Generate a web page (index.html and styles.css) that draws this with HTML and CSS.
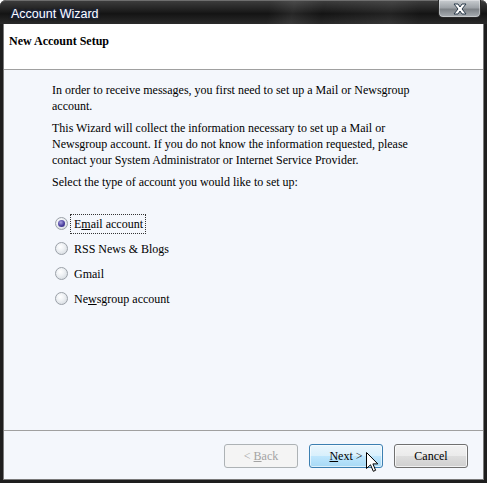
FILE: index.html
```html
<!DOCTYPE html>
<html lang="en">
<head>
  <meta charset="UTF-8">
  <title>Account Wizard</title>
  <link rel="stylesheet" href="styles.css">
</head>
<body>

  <div class="window">
    <!-- Titelleiste -->
    <div class="titlebar">
      <span class="title">Account Wizard</span>
      <div class="close">
        <svg width="16" height="12" viewBox="0 0 16 12">
          <path d="M2 1 L6 1 L8 4 L10 1 L14 1 L10 6 L14 11 L10 11 L8 8 L6 11 L2 11 L6 6 Z" fill="#fff" stroke="#2a3a4a" stroke-width="1"/>
        </svg>
      </div>
    </div>

    <div class="client">
      <div class="header">New Account Setup</div>

      <div class="content">
        <p>In order to receive messages, you first need to set up a Mail or Newsgroup<br>account.</p>
        <p>This Wizard will collect the information necessary to set up a Mail or<br>Newsgroup account. If you do not know the information requested, please<br>contact your System Administrator or Internet Service Provider.</p>
        <p>Select the type of account you would like to set up:</p>

        <div class="radios">
          <div class="radio-row">
            <span class="radio checked"></span>
            <span class="label focused">E<u>m</u>ail account</span>
          </div>
          <div class="radio-row">
            <span class="radio"></span>
            <span class="label">RSS News &amp; Blogs</span>
          </div>
          <div class="radio-row">
            <span class="radio"></span>
            <span class="label">Gmail</span>
          </div>
          <div class="radio-row">
            <span class="radio"></span>
            <span class="label">Ne<u>w</u>sgroup account</span>
          </div>
        </div>
      </div>

      <div class="footer">
        <button class="btn" disabled>&lt; <u>B</u>ack</button>
        <button class="btn default"><u>N</u>ext &gt;</button>
        <button class="btn">Cancel</button>
      </div>
    </div>

    <!-- Mauszeiger -->
    <svg class="cursor" width="13" height="21" viewBox="0 0 13 21">
      <path d="M0.5 0.5 L0.5 16.5 L4.5 12.8 L7.3 19.3 L9.6 18.3 L6.9 11.9 L11.8 11.9 Z" fill="#fff" stroke="#000" stroke-width="1" stroke-linejoin="miter"/>
    </svg>
  </div>

</body>
</html>
```

FILE: styles.css
```css
body {
  margin: 0;
  padding: 0;
  background: #fff;
}

.window {
  position: relative;
  width: 487px;
  height: 483px;
  box-sizing: border-box;
  padding: 0 3px 3px 3px;
  background: #1e1e1e;
  border-radius: 6px 6px 0 0;
  display: flex;
  flex-direction: column;
}

.titlebar {
  height: 24px;
  flex: none;
  display: flex;
  align-items: flex-start;
  justify-content: space-between;
  margin: 0 -3px;
  padding: 0 6px 0 11px;
  border-radius: 6px 6px 0 0;
  border-top: 1px solid #6e6e6e;
  box-sizing: border-box;
  background:
    linear-gradient(100deg, rgba(255,255,255,0) 55%, rgba(255,255,255,0.08) 60%, rgba(255,255,255,0) 66%, rgba(255,255,255,0.06) 80%, rgba(255,255,255,0) 86%),
    linear-gradient(to bottom, #3c3c3c 0, #1c1c1c 45%, #141414 55%, #2a2a2a 100%);
}

.title {
  font-family: "Liberation Sans", Arial, sans-serif;
  font-size: 12.5px;
  color: #fff;
  line-height: 14px;
  margin-top: 6px;
  text-shadow: 0 0 3px #1d2f6a, 0 0 2px #1d2f6a;
}

.close {
  width: 43px;
  height: 18px;
  margin-top: -1px;
  box-sizing: border-box;
  border: 1px solid #2a2a2a;
  border-top: none;
  border-radius: 0 0 5px 5px;
  background: linear-gradient(to bottom, #c9cdd1 0, #9ea3a8 45%, #7d8287 55%, #a9aeb3 100%);
  box-shadow: inset 0 0 0 1px rgba(255,255,255,0.35);
  display: flex;
  align-items: center;
  justify-content: center;
}

.client {
  flex: 1;
  display: flex;
  flex-direction: column;
  border: 1px solid #7a7a7a;
  border-top: none;
  background: #f4f7fc;
}

.header {
  height: 46px;
  box-sizing: border-box;
  background: #fff;
  border-bottom: 1px solid #a0a0a0;
  padding: 10px 0 0 5px;
  font-family: "Liberation Serif", "Times New Roman", serif;
  font-weight: bold;
  font-size: 12px;
}

.content {
  flex: 1;
  padding: 12px 0 0 48px;
  font-family: "Liberation Serif", "Times New Roman", serif;
  font-size: 12px;
  line-height: 16px;
  color: #000;
}

.content p {
  margin: 0 0 6px 0;
}

.radios {
  margin-top: 21px;
  display: flex;
  flex-direction: column;
}

.radio-row {
  height: 25px;
  display: flex;
  align-items: center;
  padding-left: 3px;
}

.radio {
  width: 13px;
  height: 13px;
  box-sizing: border-box;
  border-radius: 50%;
  border: 1px solid #9ba1a8;
  background: radial-gradient(circle at 40% 35%, #ffffff 0, #eef1f4 40%, #cdd3d9 100%);
  margin-right: 2px;
  position: relative;
}

.radio.checked::after {
  content: "";
  position: absolute;
  left: 2px;
  top: 2px;
  width: 7px;
  height: 7px;
  border-radius: 50%;
  background: radial-gradient(circle at 40% 35%, #a8a2e0 0, #4b3f9e 55%, #2c2370 100%);
}

.label {
  padding: 1px 2px 1px 3px;
  border: 1px dotted transparent;
}

.label.focused {
  border-color: #333;
}

.footer {
  height: 49px;
  flex: none;
  box-sizing: border-box;
  border-top: 1px solid #a0a0a0;
  display: flex;
  justify-content: flex-end;
  align-items: flex-start;
  gap: 11px;
  padding: 13px 15px 0 0;
}

.btn {
  width: 74px;
  height: 24px;
  box-sizing: border-box;
  font-family: "Liberation Serif", "Times New Roman", serif;
  font-size: 12px;
  color: #000;
  border: 1px solid #707070;
  border-radius: 3px;
  background: linear-gradient(to bottom, #f2f2f2 0, #ebebeb 48%, #dddddd 52%, #cfcfcf 100%);
  box-shadow: inset 0 0 0 1px rgba(255,255,255,0.7);
  padding: 0;
}

.btn:disabled {
  color: #a3a3a3;
  border-color: #adb2b5;
  background: #f4f4f4;
  box-shadow: none;
}

.btn.default {
  border-color: #3c7fb1;
  background: linear-gradient(to bottom, #eaf6fd 0, #d9f0fc 48%, #bee6fd 52%, #a7d9f5 100%);
  box-shadow: inset 0 0 0 1px rgba(255,255,255,0.6);
}

.cursor {
  position: absolute;
  left: 366px;
  top: 452px;
}
```
